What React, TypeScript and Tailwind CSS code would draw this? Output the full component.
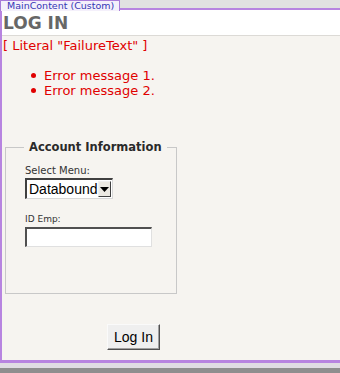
export default function App() {
  return (
    <div className="flex h-[373px] w-[340px] flex-col overflow-hidden bg-[#e1e1e1] font-['DejaVu_Sans',sans-serif]">
      {/* designer tab */}
      <div className="flex h-[8px] items-end">
        <div className="relative z-10 -mb-[3px] h-[11px] w-[120px] overflow-hidden whitespace-nowrap rounded-t-[1px] border border-b-0 border-[#a77bd8] bg-[#f4f0fb] pl-[6px] text-[9.5px] leading-[10px] text-[#3636b5]">
          MainContent (Custom)
        </div>
      </div>
      <div className="flex flex-1 flex-col border-t-2 border-l-2 border-b-[3px] border-[#b784e0] bg-[#f6f4f0]">
        <div className="h-[26px] border-b border-[#dcdad6] bg-white pl-[1px] pt-[3px] text-[17px] leading-[20px] font-bold text-[#676767]">
          LOG IN
        </div>
        <div className="pl-[1px] pt-[2px] text-[13px] leading-[15px] text-[#e00000]">[ Literal "FailureText" ]</div>
        <ul className="mt-[15px] pl-[29px] text-[13px] leading-[15px] text-[#e00000]">
          <li className="flex items-center gap-[8px]">
            <span className="h-[5px] w-[5px] rounded-full bg-[#e00000]" />
            Error message 1.
          </li>
          <li className="flex items-center gap-[8px]">
            <span className="h-[5px] w-[5px] rounded-full bg-[#e00000]" />
            Error message 2.
          </li>
        </ul>
        <fieldset className="mt-[42px] ml-[3px] h-[154px] w-[172px] min-w-0 border border-[#c8c8c8] pl-[19px]">
          <legend className="-ml-[1px] whitespace-nowrap px-[5px] text-[11.5px] leading-[14px] font-bold text-[#2a2a2a]">
            Account Information
          </legend>
          <div className="mt-[11px] text-[10px] leading-[12px] text-[#333]">Select Menu:</div>
          <div className="mt-[1px] flex h-[21px] w-[88px] items-center border-t-2 border-l-2 border-[#404040] border-r border-b border-r-[#d8d8d8] border-b-[#d8d8d8] bg-white font-['Liberation_Sans',sans-serif] text-[14px] text-black">
            <span className="flex-1 pl-[2px]">Databound</span>
            <span className="mr-[1px] flex h-[16px] w-[16px] items-center justify-center border border-t-[#f0f0f0] border-l-[#f0f0f0] border-r-[#404040] border-b-[#404040] bg-[#ece9e2]">
              <svg width="9" height="5" viewBox="0 0 9 5">
                <path d="M0 0h9L4.5 5z" fill="#000" />
              </svg>
            </span>
          </div>
          <div className="mt-[15px] text-[9px] leading-[11px] text-[#333]">ID Emp:</div>
          <div className="mt-[2px] h-[20px] w-[127px] border-t-2 border-l-2 border-[#505050] border-r border-b border-r-[#e0e0e0] border-b-[#e0e0e0] bg-white" />
        </fieldset>
        <div className="mt-[30px] ml-[105px]">
          <button className="h-[26px] w-[53px] border border-t-[#fafafa] border-l-[#fafafa] border-r-[#505050] border-b-[#505050] bg-[#efefef] font-['Liberation_Sans',sans-serif] text-[14px] text-black shadow-[inset_-1px_-1px_0_#a0a0a0]">
            Log In
          </button>
        </div>
      </div>
      <div className="h-[5px] bg-[#dfdde3]" />
      <div className="h-[5px] bg-[#8e8e8e]" />
    </div>
  )
}
